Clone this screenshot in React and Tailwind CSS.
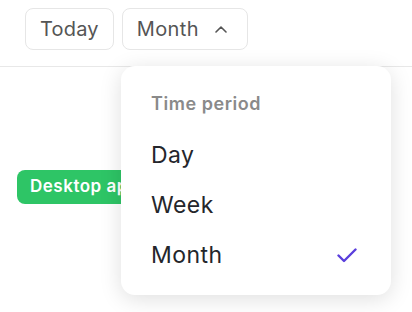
import { useState } from "react";

const periods = ["Day", "Week", "Month"];

export default function App() {
  const [period, setPeriod] = useState("Month");

  return (
    <div className="relative h-[312px] w-[412px] overflow-hidden bg-white font-['Inter',sans-serif]">
      {/* Toolbar */}
      <div className="flex gap-2 border-b border-[#e8e8e8] pl-[25px] pt-2 pb-4">
        <button className="h-[42px] rounded-lg border border-[#e6e6e6] px-[14px] text-[20px] tracking-[0.01em] text-[#555]">
          Today
        </button>
        <button className="flex h-[42px] items-center gap-[16px] rounded-lg border border-[#e6e6e6] pl-[14px] pr-[20px] text-[20px] tracking-[0.02em] text-[#555]">
          {period}
          <svg width="12" height="7" viewBox="0 0 12 7" fill="none">
            <path d="M1 6l5-5 5 5" stroke="#555" strokeWidth="1.6" strokeLinecap="round" strokeLinejoin="round" />
          </svg>
        </button>
      </div>

      {/* Content */}
      <div className="pl-[17px] pt-[103px]">
        <span className="inline-flex h-[34px] items-center rounded-lg bg-[#2ec566] px-[13px] text-[17px] font-semibold tracking-[0.03em] text-white">
          Desktop app release
        </span>
      </div>

      {/* Dropdown */}
      <div className="absolute left-[121px] top-[66px] w-[270px] rounded-[14px] bg-white pt-[26px] pb-[15px] shadow-[0_4px_22px_rgba(0,0,0,0.13)]">
        <div className="mb-[14px] px-[30px] text-[18px] font-semibold leading-6 tracking-[0.03em] text-[#8a8a8a]">
          Time period
        </div>
        {periods.map((p) => (
          <div
            key={p}
            onClick={() => setPeriod(p)}
            className="flex h-[50px] cursor-pointer items-center justify-between pl-[30px] pr-[34px] text-[23px] tracking-[0.02em] text-[#24262b]"
          >
            {p}
            {period === p && (
              <svg width="20" height="15" viewBox="0 0 20 15" fill="none">
                <path d="M1.5 7.5l5.5 5.5L18.5 1.5" stroke="#5a3fdc" strokeWidth="2.4" strokeLinecap="round" strokeLinejoin="round" />
              </svg>
            )}
          </div>
        ))}
      </div>
    </div>
  );
}
